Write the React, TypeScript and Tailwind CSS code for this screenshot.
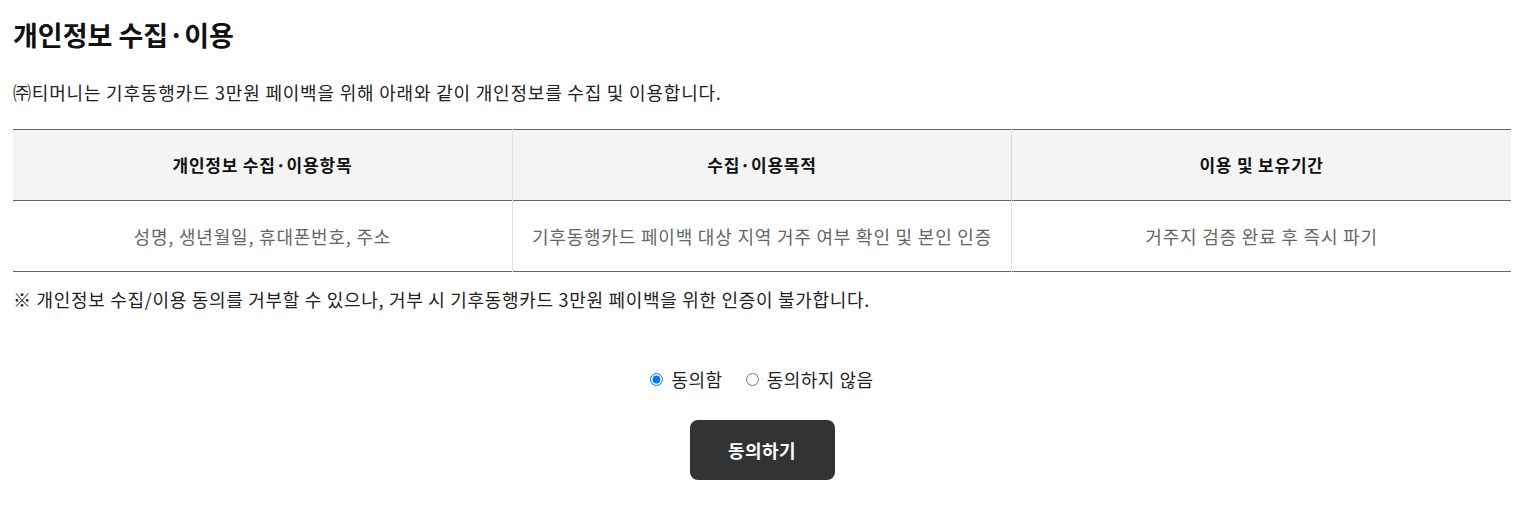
import { useState } from "react";

const rows = [
  {
    item: "성명, 생년월일, 휴대폰번호, 주소",
    purpose: "기후동행카드 페이백 대상 지역 거주 여부 확인 및 본인 인증",
    period: "거주지 검증 완료 후 즉시 파기",
  },
];

export default function App() {
  const [agree, setAgree] = useState(true);

  return (
    <div
      className="px-[13px] pt-[16px] bg-white text-[#111]"
      style={{ fontFamily: '"Noto Sans CJK KR", "Noto Sans", sans-serif' }}
    >
      {/* 제목 */}
      <h2 className="text-[27px] font-bold leading-[38px]">개인정보 수집·이용</h2>
      <p className="mt-[26px] text-[18px] leading-[25px] text-[#222] tracking-[0.8px]">
        ㈜티머니는 기후동행카드 3만원 페이백을 위해 아래와 같이 개인정보를 수집 및 이용합니다.
      </p>

      {/* 표 */}
      <table className="mt-[24px] w-full table-fixed border-collapse border-t border-b border-[#666]">
        <thead>
          <tr className="bg-[#f4f4f4] border-b border-[#666]">
            <th className="h-[71px] text-[17px] font-bold text-[#111] tracking-[0.8px] border-r border-[#ddd]">개인정보 수집·이용항목</th>
            <th className="h-[71px] text-[17px] font-bold text-[#111] tracking-[0.8px] border-r border-[#ddd]">수집·이용목적</th>
            <th className="h-[71px] text-[17px] font-bold text-[#111] tracking-[0.8px]">이용 및 보유기간</th>
          </tr>
        </thead>
        <tbody>
          {rows.map((r) => (
            <tr key={r.item}>
              <td className="h-[71px] text-center text-[18px] text-[#666] tracking-[0.8px] border-r border-[#ddd]">{r.item}</td>
              <td className="h-[71px] text-center text-[18px] text-[#666] tracking-[0.8px] border-r border-[#ddd]">{r.purpose}</td>
              <td className="h-[71px] text-center text-[18px] text-[#666] tracking-[0.8px]">{r.period}</td>
            </tr>
          ))}
        </tbody>
      </table>

      <p className="mt-[15px] text-[18px] leading-[25px] text-[#222] tracking-[0.7px]">
        ※ 개인정보 수집/이용 동의를 거부할 수 있으나, 거부 시 기후동행카드 3만원 페이백을 위한 인증이 불가합니다.
      </p>

      {/* 동의 선택 */}
      <div className="mt-[54px] flex justify-center items-center gap-[23px] text-[18px] leading-[27px] text-[#222] tracking-[0.5px]">
        <label className="flex items-center gap-[8px] cursor-pointer">
          <input
            type="radio"
            name="agree"
            checked={agree}
            onChange={() => setAgree(true)}
            className="w-[13px] h-[13px] m-0 accent-[#0075ff]"
          />
          동의함
        </label>
        <label className="flex items-center gap-[8px] cursor-pointer">
          <input
            type="radio"
            name="agree"
            checked={!agree}
            onChange={() => setAgree(false)}
            className="w-[13px] h-[13px] m-0 accent-[#0075ff]"
          />
          동의하지 않음
        </label>
      </div>

      <div className="mt-[27px] flex justify-center">
        <button className="w-[145px] h-[60px] rounded-[8px] bg-[#333] text-white text-[18px] font-bold tracking-[0.5px]">
          동의하기
        </button>
      </div>
    </div>
  );
}
